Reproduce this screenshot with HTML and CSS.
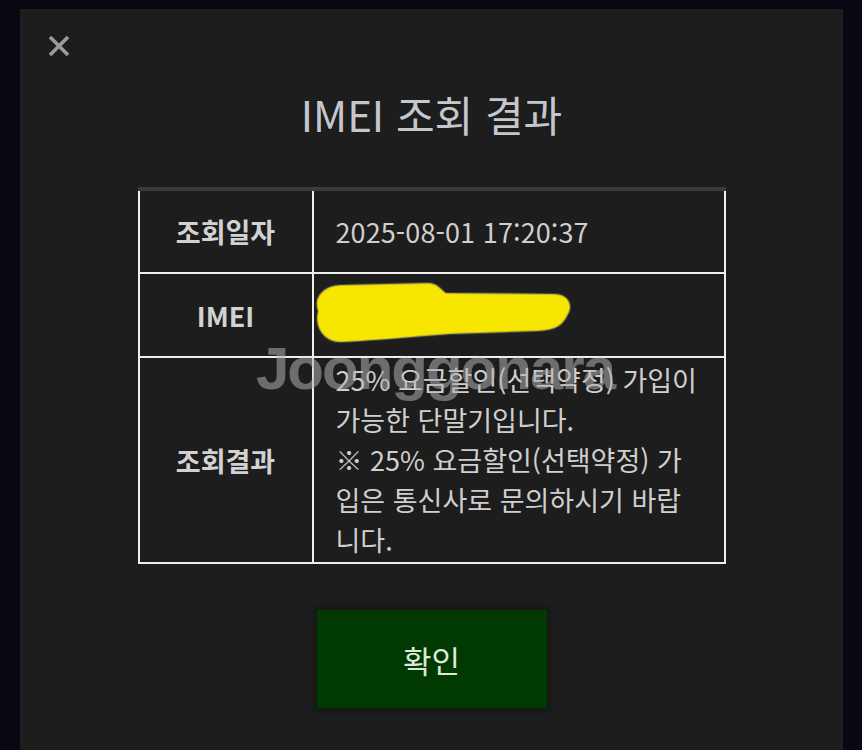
FILE: index.html
```html
<!DOCTYPE html>
<html lang="ko">
<head>
<meta charset="utf-8">
<title>IMEI 조회 결과</title>
<link rel="stylesheet" href="styles.css">
</head>
<body>
<div class="modal">
  <button class="close" aria-label="닫기">
    <svg viewBox="0 0 24 24" width="24" height="24"><path d="M3 3 L21 21 M21 3 L3 21" stroke="#9b9b9d" stroke-width="3.6" stroke-linecap="butt"/></svg>
  </button>
  <h1 class="title">IMEI 조회 결과</h1>
  <table class="result">
    <tr class="row-date">
      <th>조회일자</th>
      <td class="date">2025-08-01 17:20:37</td>
    </tr>
    <tr class="row-imei">
      <th>IMEI</th>
      <td class="redacted">
        <svg class="scribble" viewBox="0 0 266 66" width="266" height="66"><path d="M8 30 C3 16 14 4 32 4 L118 2 C128 2 131 9 136 12 L244 13 C259 13 264 25 257 35 C252 45 245 49 228 50 L140 53 C110 55 62 60 32 61 C14 62 4 46 8 30 Z" fill="#f6e600" stroke="#77776a" stroke-opacity="0.45" stroke-width="2"/></svg>
      </td>
    </tr>
    <tr class="row-result">
      <th>조회결과</th>
      <td class="msg">25% 요금할인(선택약정) 가입이 가능한 단말기입니다.<br>※ 25% 요금할인(선택약정) 가입은 통신사로 문의하시기 바랍니다.</td>
    </tr>
  </table>
  <div class="actions">
    <button class="confirm">확인</button>
  </div>
  <div class="watermark">Joonggonara</div>
</div>
</body>
</html>
```

FILE: styles.css
```css
html, body {
  margin: 0;
  padding: 0;
  background: #070812;
  height: 750px;
  overflow: hidden;
}
body {
  font-family: "Noto Sans CJK KR", "Noto Sans", sans-serif;
}
.modal {
  position: relative;
  margin: 9px 19px 0 20px;
  height: 741px;
  background: #1c1d1c;
  box-sizing: border-box;
  padding-top: 25px;
}
.close {
  display: block;
  margin-left: 27px;
  width: 24px;
  height: 24px;
  padding: 0;
  border: 0;
  background: none;
}
.close svg {
  display: block;
}
.title {
  margin: 32px 0 0;
  text-align: center;
  font-size: 42px;
  font-weight: 400;
  line-height: 48px;
  color: #c6c7cd;
}
.result {
  margin: 49px auto 0;
  width: 588px;
  border-collapse: collapse;
  border-top: 4px solid #3a3b3a;
}
.result th, .result td {
  border: 2px solid #eeeeee;
}
.result tr:first-child th, .result tr:first-child td {
  border-top: 0;
}
.result th {
  width: 172px;
  font-size: 27px;
  font-weight: 700;
  color: #d2d2d2;
  text-align: center;
  padding: 0;
}
.result td {
  font-size: 27px;
  color: #cfcfcf;
  text-align: left;
  padding: 0 24px 0 22px;
}
.result .date {
  letter-spacing: 0.1px;
}
.row-date th, .row-date td {
  height: 81px;
}
.row-imei th, .row-imei td {
  height: 82px;
}
.result .redacted {
  position: relative;
}
.scribble {
  position: absolute;
  left: -4px;
  top: 7px;
}
.result .msg {
  line-height: 40px;
  padding-top: 2px;
  padding-bottom: 2px;
  word-break: break-all;
}
.actions {
  display: flex;
  justify-content: center;
  margin-top: 46px;
}
.confirm {
  width: 230px;
  height: 98px;
  border: 0;
  background: #013a01;
  color: #dde9d6;
  font-family: "Noto Sans CJK KR", "Noto Sans", sans-serif;
  font-size: 31px;
  font-weight: 400;
  box-shadow: 0 0 6px 2px rgba(0,0,0,0.35);
}
.watermark {
  position: absolute;
  left: 236px;
  top: 325px;
  font-family: "Liberation Sans", Arial, sans-serif;
  font-weight: 700;
  font-size: 60px;
  letter-spacing: -2px;
  color: rgba(175, 175, 175, 0.55);
  pointer-events: none;
}
```
